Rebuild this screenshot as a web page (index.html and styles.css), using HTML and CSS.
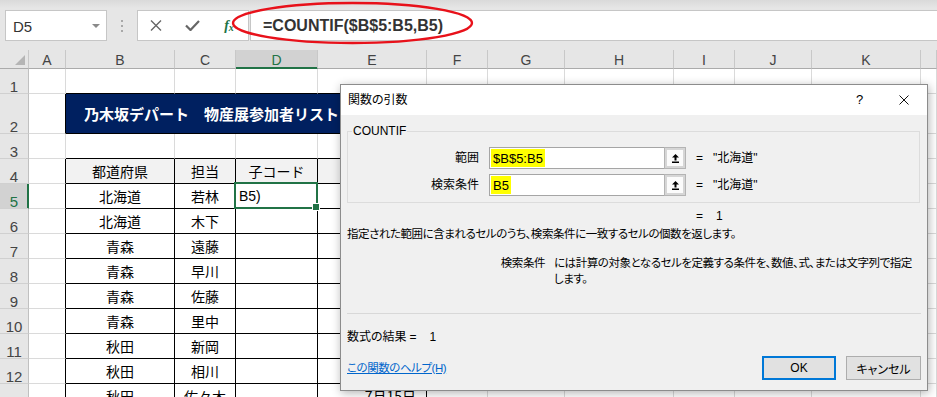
FILE: index.html
```html
<!DOCTYPE html>
<html lang="ja">

<head>
    <meta charset="UTF-8">
    <title>COUNTIF 関数の引数</title>
    <link rel="stylesheet" href="styles.css">
</head>

<body>
    <div class="app">
        <!-- 数式バー -->
        <div class="fbar">
            <div class="namebox">
                <span>D5</span>
                <svg width="8" height="4" viewBox="0 0 8 4"><polygon points="0,0 8,0 4,4" fill="#8a8a8a"/></svg>
            </div>
            <div class="grip">
                <svg width="2" height="12" viewBox="0 0 2 12"><rect y="0" width="2" height="2" fill="#a8a8a8"/><rect y="5" width="2" height="2" fill="#a8a8a8"/><rect y="10" width="2" height="2" fill="#a8a8a8"/></svg>
            </div>
            <div class="fbtns">
                <span><svg width="12" height="11" viewBox="0 0 12 11"><path d="M1 0.5 L11 10.5 M11 0.5 L1 10.5" stroke="#666" stroke-width="1.4"/></svg></span>
                <span><svg width="15" height="11" viewBox="0 0 15 11"><path d="M1 5.5 L5.5 10 L14 1" stroke="#666" stroke-width="2.2" fill="none"/></svg></span>
                <span class="fx">f<small>x</small></span>
            </div>
            <div class="finput">=COUNTIF($B$5:B5,B5)</div>
            <svg class="mark" width="244" height="46" viewBox="0 0 244 46"><ellipse cx="121.5" cy="22" rx="119.5" ry="20" fill="none" stroke="#e8111a" stroke-width="2.4"/></svg>
        </div>

        <!-- シート -->
        <div class="sheet">
            <div class="row hdr">
                <div class="corner"><svg width="10" height="10" viewBox="0 0 10 10"><polygon points="10,0 10,10 0,10" fill="#b5b5b5"/></svg></div>
                <div>A</div><div>B</div><div>C</div><div class="hsel">D</div><div>E</div><div>F</div><div>G</div><div>H</div><div>I</div><div>J</div><div>K</div><div></div>
            </div>
            <div class="row">
                <div class="rh">1</div><div></div><div class="bb"></div><div class="bb"></div><div class="bb"></div><div class="bb"></div><div></div><div></div><div></div><div></div><div></div><div></div><div></div>
            </div>
            <div class="row tall">
                <div class="rh">2</div><div class="br"></div><div class="band">乃木坂デパート　物産展参加者リスト</div><div></div><div></div><div></div><div></div><div></div><div></div><div></div>
            </div>
            <div class="row">
                <div class="rh">3</div><div></div><div class="bb"></div><div class="bb"></div><div class="bb"></div><div class="bb"></div><div></div><div></div><div></div><div></div><div></div><div></div><div></div>
            </div>
            <div class="row">
                <div class="rh">4</div><div class="br"></div><div class="t th">都道府県</div><div class="t th">担当</div><div class="t th">子コード</div><div class="t th">日付</div><div></div><div></div><div></div><div></div><div></div><div></div><div></div>
            </div>
            <div class="row">
                <div class="rh rsel">5</div><div class="br"></div><div class="t">北海道</div><div class="t">若林</div><div class="t cur">B5)</div><div class="t"></div><div></div><div></div><div></div><div></div><div></div><div></div><div></div>
            </div>
            <div class="row">
                <div class="rh">6</div><div class="br"></div><div class="t">北海道</div><div class="t">木下</div><div class="t"></div><div class="t"></div><div></div><div></div><div></div><div></div><div></div><div></div><div></div>
            </div>
            <div class="row">
                <div class="rh">7</div><div class="br"></div><div class="t">青森</div><div class="t">遠藤</div><div class="t"></div><div class="t"></div><div></div><div></div><div></div><div></div><div></div><div></div><div></div>
            </div>
            <div class="row">
                <div class="rh">8</div><div class="br"></div><div class="t">青森</div><div class="t">早川</div><div class="t"></div><div class="t"></div><div></div><div></div><div></div><div></div><div></div><div></div><div></div>
            </div>
            <div class="row">
                <div class="rh">9</div><div class="br"></div><div class="t">青森</div><div class="t">佐藤</div><div class="t"></div><div class="t"></div><div></div><div></div><div></div><div></div><div></div><div></div><div></div>
            </div>
            <div class="row">
                <div class="rh">10</div><div class="br"></div><div class="t">青森</div><div class="t">里中</div><div class="t"></div><div class="t"></div><div></div><div></div><div></div><div></div><div></div><div></div><div></div>
            </div>
            <div class="row">
                <div class="rh">11</div><div class="br"></div><div class="t">秋田</div><div class="t">新岡</div><div class="t"></div><div class="t"></div><div></div><div></div><div></div><div></div><div></div><div></div><div></div>
            </div>
            <div class="row">
                <div class="rh">12</div><div class="br"></div><div class="t">秋田</div><div class="t">相川</div><div class="t"></div><div class="t"></div><div></div><div></div><div></div><div></div><div></div><div></div><div></div>
            </div>
            <div class="row">
                <div class="rh">13</div><div class="br"></div><div class="t">秋田</div><div class="t">佐々木</div><div class="t"></div><div class="t date">7月15日</div><div></div><div></div><div></div><div></div><div></div><div></div><div></div>
            </div>
        </div>

        <!-- 関数の引数ダイアログ -->
        <div class="dialog">
            <div class="dtitle">
                <span>関数の引数</span>
                <div class="tbtns">
                    <span class="q">?</span>
                    <span><svg width="10" height="10" viewBox="0 0 10 10"><path d="M0.5 0.5 L9.5 9.5 M9.5 0.5 L0.5 9.5" stroke="#111" stroke-width="1"/></svg></span>
                </div>
            </div>
            <div class="dbody">
                <fieldset class="grp">
                    <legend>COUNTIF</legend>
                    <div class="arg">
                        <label>範囲</label>
                        <div class="field">
                            <div class="inp"><span class="hl">$B$5:B5</span></div>
                            <span class="ref"><span><svg width="7" height="9" viewBox="0 0 7 9"><polygon points="3.5,0 7,3.5 4.5,3.5 4.5,6.5 2.5,6.5 2.5,3.5 0,3.5" fill="#000"/><rect y="7.5" width="7" height="1.5" fill="#000"/></svg></span></span>
                        </div>
                        <span class="val"><span class="eq">=</span>"北海道"</span>
                    </div>
                    <div class="arg">
                        <label>検索条件</label>
                        <div class="field">
                            <div class="inp"><span class="hl">B5</span></div>
                            <span class="ref"><span><svg width="7" height="9" viewBox="0 0 7 9"><polygon points="3.5,0 7,3.5 4.5,3.5 4.5,6.5 2.5,6.5 2.5,3.5 0,3.5" fill="#000"/><rect y="7.5" width="7" height="1.5" fill="#000"/></svg></span></span>
                        </div>
                        <span class="val"><span class="eq">=</span>"北海道"</span>
                    </div>
                </fieldset>
                <div class="fres"><span class="eq wide">=</span>1</div>
                <p class="desc">指定された範囲に含まれるセルのうち、検索条件に一致するセルの個数を返します。</p>
                <div class="help">
                    <span class="hlabel">検索条件</span>
                    <span class="htext">には計算の対象となるセルを定義する条件を、数値、式、または文字列で指定<br>します。</span>
                </div>
                <hr class="sep">
                <div class="result"><span>数式の結果</span><span class="eq">=</span><span>1</span></div>
                <div class="dfoot">
                    <a class="link" href="#">この関数のヘルプ(H)</a>
                    <div class="btns">
                        <button class="btn okbtn">OK</button>
                        <button class="btn">キャンセル</button>
                    </div>
                </div>
            </div>
        </div>
    </div>
</body>

</html>
```

FILE: styles.css
```css
* {
    box-sizing: border-box;
}

body {
    margin: 0;
    width: 937px;
    height: 397px;
    overflow: hidden;
    background-color: #fff;
    font-family: "Liberation Sans", Arial, sans-serif;
}

.app {
    position: relative;
    height: 397px;
    overflow: hidden;
}

/* 数式バー */
.fbar {
    position: relative;
    height: 50px;
    display: flex;
    align-items: flex-start;
    padding: 10px 0 0 5px;
    background: linear-gradient(#dadada, #e6e6e6 8px);
}

.namebox {
    width: 102px;
    height: 31px;
    display: flex;
    align-items: center;
    justify-content: space-between;
    padding: 1px 6px 0 7px;
    background-color: #fff;
    border: 1px solid #c6c6c6;
    font-size: 15px;
    color: #333;
}

.grip {
    width: 30px;
    height: 31px;
    display: flex;
    align-items: center;
    justify-content: center;
}

.fbtns {
    width: 112px;
    height: 31px;
    display: flex;
    margin-right: 1px;
    background-color: #fff;
    border: 1px solid #c6c6c6;
}

.fbtns span {
    width: 36px;
    display: flex;
    align-items: center;
    justify-content: center;
}

.fbtns .fx {
    font-family: "Liberation Serif", serif;
    font-style: italic;
    font-weight: bold;
    font-size: 14px;
    color: #217346;
    padding-left: 2px;
}

.fx small {
    font-size: 10px;
    margin-top: 4px;
}

.finput {
    flex: 1;
    height: 31px;
    display: flex;
    align-items: center;
    padding-left: 12px;
    background-color: #fff;
    border: 1px solid #c6c6c6;
    border-right: none;
    font-size: 16px;
    font-weight: bold;
    color: #333;
}

.mark {
    position: absolute;
    left: 231px;
    top: 1px;
}

/* シート */
.row {
    display: grid;
    grid-template-columns: 29px 37px 109px 61px 82px 109px 61px 77px 109px 61px 77px 109px 1fr;
    height: 25px;
}

.row.tall {
    height: 40px;
}

.row > div {
    display: flex;
    align-items: center;
    justify-content: center;
    border-right: 1px solid #dadada;
    border-bottom: 1px solid #dadada;
    font-family: "Noto Sans CJK JP", sans-serif;
    font-size: 14px;
    color: #000;
    white-space: nowrap;
}

.row.hdr {
    height: 19px;
    background-color: #e6e6e6;
}

.row.hdr > div {
    align-items: flex-start;
    padding-top: 3px;
    line-height: 15px;
    border-right-color: #c8c8c8;
    border-bottom-color: #ababab;
    font-family: "Liberation Sans", Arial, sans-serif;
    color: #444;
}

.row.hdr > .corner {
    align-items: flex-end;
    justify-content: flex-end;
    padding: 0 3px 3px 0;
}

.row.hdr > .hsel {
    background-color: #d2d2d2;
    color: #217346;
    border-bottom-color: #217346;
    box-shadow: inset 0 -1px 0 #217346;
}

.row > .rh {
    align-items: flex-end;
    background-color: #e6e6e6;
    border-right-color: #c0c0c0;
    border-bottom-color: #d0d0d0;
    font-family: "Liberation Sans", Arial, sans-serif;
    font-size: 15px;
    line-height: 13px;
    color: #444;
}

.row > .rsel {
    background-color: #d2d2d2;
    color: #217346;
    border-right-color: #217346;
    box-shadow: inset -1px 0 0 #217346;
}

.row > .bb {
    border-bottom-color: #000;
}

.row > .br {
    border-right-color: #000;
}

.row > .t {
    border-right-color: #000;
    border-bottom-color: #000;
}

.row > .th {
    background-color: #f2f2f2;
}

.row > .band {
    grid-column: span 4;
    justify-content: flex-start;
    padding-left: 18px;
    background-color: #002060;
    border-right-color: #000;
    border-bottom-color: #000;
    color: #fff;
    font-size: 15px;
    font-weight: bold;
}

.row > .cur {
    position: relative;
    z-index: 1;
    justify-content: flex-start;
    padding-left: 3px;
    font-family: "Liberation Sans", Arial, sans-serif;
}

.cur::before {
    content: "";
    position: absolute;
    inset: -2px -1px -1px -2px;
    border: 2px solid #217346;
}

.cur::after {
    content: "";
    position: absolute;
    right: -3px;
    bottom: -3px;
    width: 6px;
    height: 6px;
    background-color: #217346;
    border: 1px solid #fff;
}

.row > .date {
    justify-content: flex-end;
    padding-right: 10px;
}

/* ダイアログ */
.dialog {
    position: absolute;
    left: 340px;
    top: 84px;
    width: 588px;
    height: 307px;
    display: flex;
    flex-direction: column;
    background-color: #f0f0f0;
    border: 1px solid #8c8c8c;
    box-shadow: 1px 2px 9px rgba(0, 0, 0, 0.3);
    font-family: "Liberation Sans", "Noto Sans CJK JP", sans-serif;
    font-size: 12px;
    font-feature-settings: "palt";
    line-height: 16px;
    color: #000;
}

.dtitle {
    height: 30px;
    display: flex;
    align-items: center;
    justify-content: space-between;
    padding-left: 7px;
    background-color: #fff;
}

.tbtns {
    display: flex;
    height: 100%;
}

.tbtns span {
    width: 46px;
    display: flex;
    align-items: center;
    justify-content: center;
}

.tbtns .q {
    font-size: 13px;
    padding-left: 3px;
}

.dbody {
    flex: 1;
    padding: 0 6px;
}

.grp {
    margin: 8px 1px 0 0;
    padding: 8px 0 6px 0;
    border: 1px solid #dcdcdc;
}

.grp legend {
    margin-left: 4px;
    padding: 0 1px;
}

.arg {
    display: grid;
    grid-template-columns: 131px 197px auto;
    column-gap: 10px;
    align-items: center;
    height: 22px;
}

.arg + .arg {
    margin-top: 5px;
}

.arg label {
    text-align: right;
}

.field {
    display: flex;
    height: 22px;
}

.inp {
    width: 175px;
    height: 22px;
    padding: 1px 0 1px 1px;
    background-color: #fff;
    border: 1px solid #a5a5a5;
    border-right: none;
}

.hl {
    display: inline-block;
    height: 100%;
    padding: 1px 2px 0 2px;
    background-color: #ffff00;
    font-size: 13px;
    line-height: 17px;
}

.ref {
    width: 22px;
    height: 22px;
    display: flex;
    align-items: center;
    justify-content: center;
    background-color: #d6d6d6;
    border: 1px solid #b4b4b4;
}

.ref span {
    width: 16px;
    height: 16px;
    display: flex;
    align-items: center;
    justify-content: center;
    background-color: #fbfbfb;
}

.eq {
    display: inline-block;
    width: 17px;
}

.eq.wide {
    width: 20px;
}

.fres {
    margin-top: 5px;
    padding-left: 349px;
}

.desc {
    margin: 2px 0 0 0;
}

.desc,
.help,
.link {
    font-size: 11.5px;
    letter-spacing: -0.45px;
}

.help {
    display: grid;
    grid-template-columns: 198px auto;
    column-gap: 9px;
    margin-top: 13px;
    white-space: nowrap;
}

.hlabel {
    text-align: right;
}

.sep {
    margin: 26px 0 0 0;
    height: 1px;
    border: none;
    background-color: #d8d8d8;
}

.result {
    display: flex;
    margin-top: 15px;
}

.result .eq {
    width: 20px;
    margin-left: 3px;
}

.dfoot {
    display: flex;
    align-items: center;
    justify-content: space-between;
    margin-top: 11px;
}

.link {
    color: #0066cc;
    text-decoration: underline;
}

.btns {
    display: flex;
    gap: 10px;
}

.btn {
    width: 75px;
    height: 24px;
    padding: 0;
    background-color: #e1e1e1;
    border: 1px solid #adadad;
    font-family: inherit;
    font-size: 12px;
    font-feature-settings: "palt";
    color: #000;
}

.okbtn {
    width: 74px;
    border: 2px solid #0078d7;
}
```
